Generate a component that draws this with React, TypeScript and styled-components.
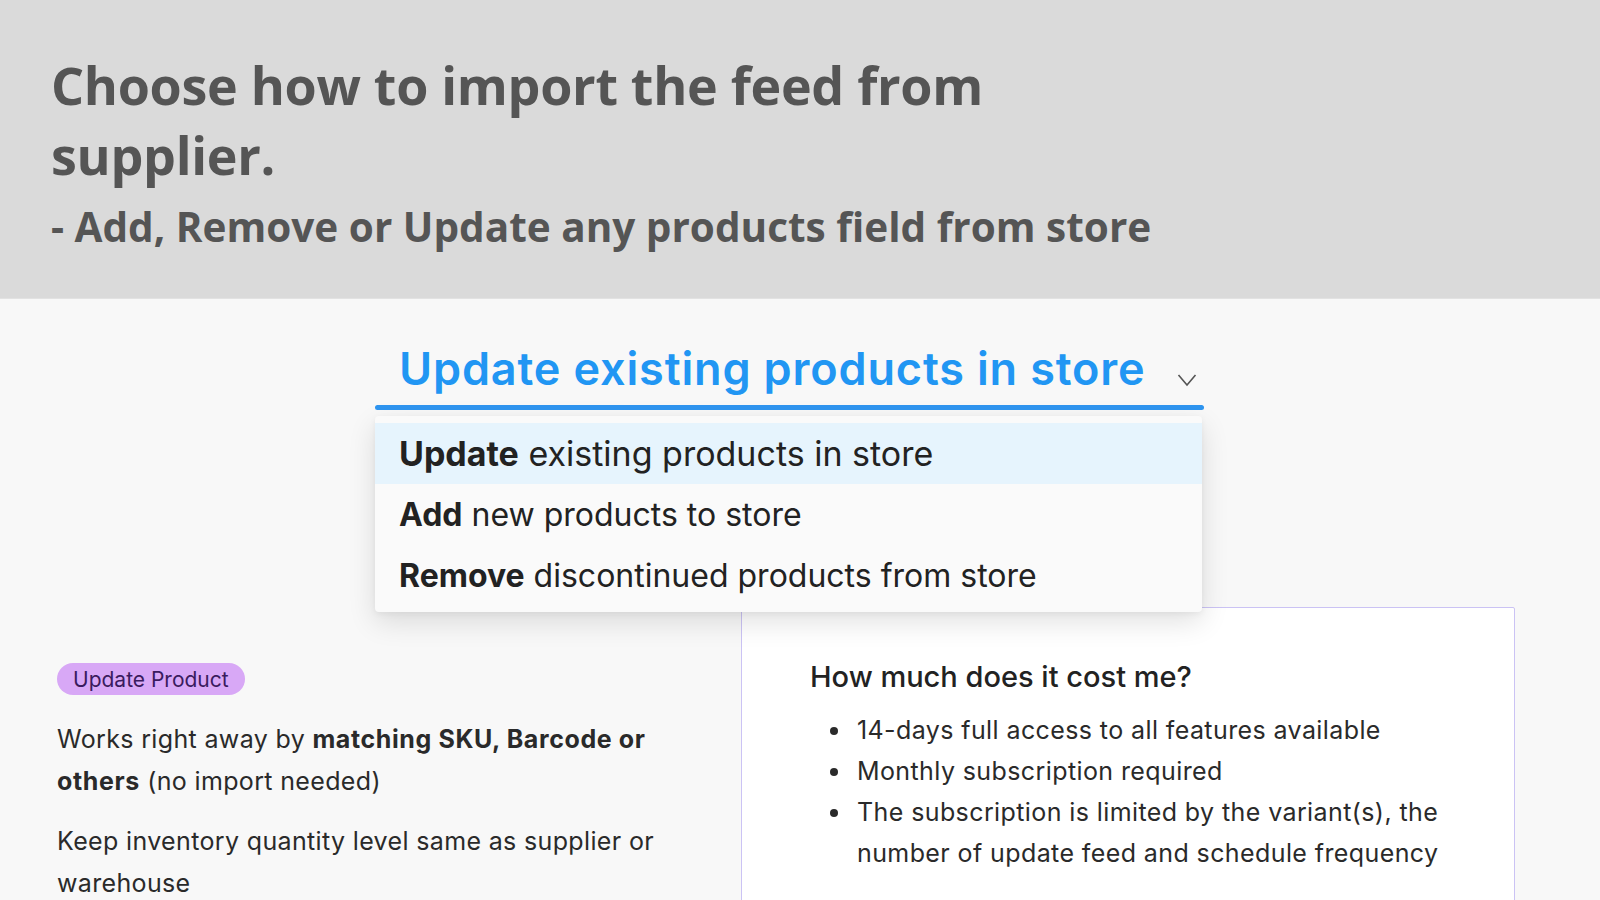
import React, { useState } from 'react';
import styled, { createGlobalStyle } from 'styled-components';

const GlobalStyle = createGlobalStyle`
  html, body {
    margin: 0;
    padding: 0;
    background: #f8f8f8;
    overflow: hidden;
  }
  * {
    box-sizing: border-box;
  }
`;

const Header = styled.header`
  height: 299px;
  background: #dadada;
  border-bottom: 1px solid #e2e2e2;
  padding: 50px 0 0 51px;
  font-family: 'Open Sans', 'Liberation Sans', sans-serif;
  color: #555555;
`;

const Title = styled.h1`
  margin: 0;
  max-width: 1000px;
  font-size: 52px;
  line-height: 70px;
  font-weight: 700;
  letter-spacing: -0.3px;
`;

const Subtitle = styled.h2`
  margin: 11px 0 0;
  font-size: 40.5px;
  line-height: 52px;
  font-weight: 700;
`;

const Main = styled.main`
  padding-top: 42px;
  font-family: Inter, 'Noto Sans', 'Liberation Sans', sans-serif;
  color: #262626;
`;

const SelectWrap = styled.div`
  position: relative;
  width: 829px;
  margin-left: 375px;
`;

const Trigger = styled.div`
  display: flex;
  align-items: flex-end;
  justify-content: space-between;
  padding: 0 7px 9px 24px;
  cursor: pointer;
`;

const TriggerText = styled.span`
  font-size: 45px;
  font-weight: 600;
  color: #2196f3;
  letter-spacing: 0.85px;
`;

const Chevron = styled.svg`
  width: 20px;
  height: 14px;
  margin-bottom: 9px;
`;

const Underline = styled.div`
  height: 5px;
  border-radius: 3px;
  background: #2f95f0;
`;

const Menu = styled.ul`
  position: absolute;
  top: 75px;
  left: 0;
  width: 827px;
  margin: 0;
  padding: 7px 0 6px;
  list-style: none;
  background: #fafafa;
  border-radius: 4px;
  box-shadow: 0 10px 28px rgba(0, 0, 0, 0.12), 0 2px 6px rgba(0, 0, 0, 0.05);
  z-index: 5;
`;

const MenuItem = styled.li<{ $active?: boolean }>`
  height: 61px;
  padding-left: 24px;
  font-size: ${(p) => (p.$active ? '34px' : '32px')};
  line-height: 61px;
  color: #222222;
  background: ${(p) => (p.$active ? '#e6f4fd' : 'transparent')};
  white-space: nowrap;
  cursor: pointer;

  b {
    font-weight: 700;
  }
`;

const Lower = styled.section`
  display: flex;
  align-items: flex-start;
  gap: 64px;
  margin-top: 197px;
  padding-left: 57px;
`;

const LeftCol = styled.div`
  width: 620px;
  padding-top: 56px;
`;

const Badge = styled.span`
  display: inline-flex;
  align-items: center;
  height: 32px;
  padding: 0 16px;
  border-radius: 16px;
  background: #d8a8f6;
  color: #3a1b5e;
  font-size: 21px;
`;

const Para = styled.p`
  margin: 23px 0 18px;
  font-size: 25px;
  line-height: 42px;
  letter-spacing: 0.35px;
  color: #2a2a2a;

  & + & {
    margin-top: 18px;
  }

  b {
    font-weight: 700;
    letter-spacing: 0.6px;
  }
`;

const Card = styled.div`
  width: 774px;
  min-height: 400px;
  padding: 49px 58px 0 68px;
  background: #ffffff;
  border: 1px solid #cbc3f4;
  border-radius: 2px;
`;

const CardTitle = styled.h3`
  margin: 0;
  font-size: 29px;
  line-height: 40px;
  font-weight: 500;
  color: #222222;
`;

const Bullets = styled.ul`
  margin: 13px 0 0;
  padding-left: 43px;
  font-size: 25px;
  line-height: 41px;
  letter-spacing: 0.4px;
  color: #2a2a2a;

  li {
    padding-left: 4px;
  }
`;

const options = [
  { key: 'update', strong: 'Update', rest: 'existing products in store' },
  { key: 'add', strong: 'Add', rest: 'new products to store' },
  { key: 'remove', strong: 'Remove', rest: 'discontinued products from store' },
];

export default function App(): JSX.Element {
  const [selected, setSelected] = useState('update');
  const [open, setOpen] = useState(true);

  const current = options.find((o) => o.key === selected) || options[0];

  return (
    <>
      <GlobalStyle />
      <Header>
        <Title>Choose how to import the feed from supplier.</Title>
        <Subtitle>- Add, Remove or Update any products field from store</Subtitle>
      </Header>
      <Main>
        <SelectWrap>
          <Trigger onClick={() => setOpen((o) => !o)}>
            <TriggerText>
              {current.strong} {current.rest}
            </TriggerText>
            <Chevron viewBox="0 0 20 14" fill="none">
              <polyline points="1.5,2 10,12 18.5,2" stroke="#555" strokeWidth="1.6" />
            </Chevron>
          </Trigger>
          <Underline />
          {open && (
            <Menu>
              {options.map((o) => (
                <MenuItem
                  key={o.key}
                  $active={o.key === selected}
                  onClick={() => {
                    setSelected(o.key);
                    setOpen(false);
                  }}
                >
                  <b>{o.strong}</b> {o.rest}
                </MenuItem>
              ))}
            </Menu>
          )}
        </SelectWrap>
        <Lower>
          <LeftCol>
            <Badge>Update Product</Badge>
            <Para>
              Works right away by <b>matching SKU, Barcode or others</b> (no import needed)
            </Para>
            <Para>Keep inventory quantity level same as supplier or warehouse</Para>
          </LeftCol>
          <Card>
            <CardTitle>How much does it cost me?</CardTitle>
            <Bullets>
              <li>14-days full access to all features available</li>
              <li>Monthly subscription required</li>
              <li>The subscription is limited by the variant(s), the number of update feed and schedule frequency</li>
            </Bullets>
          </Card>
        </Lower>
      </Main>
    </>
  );
}
